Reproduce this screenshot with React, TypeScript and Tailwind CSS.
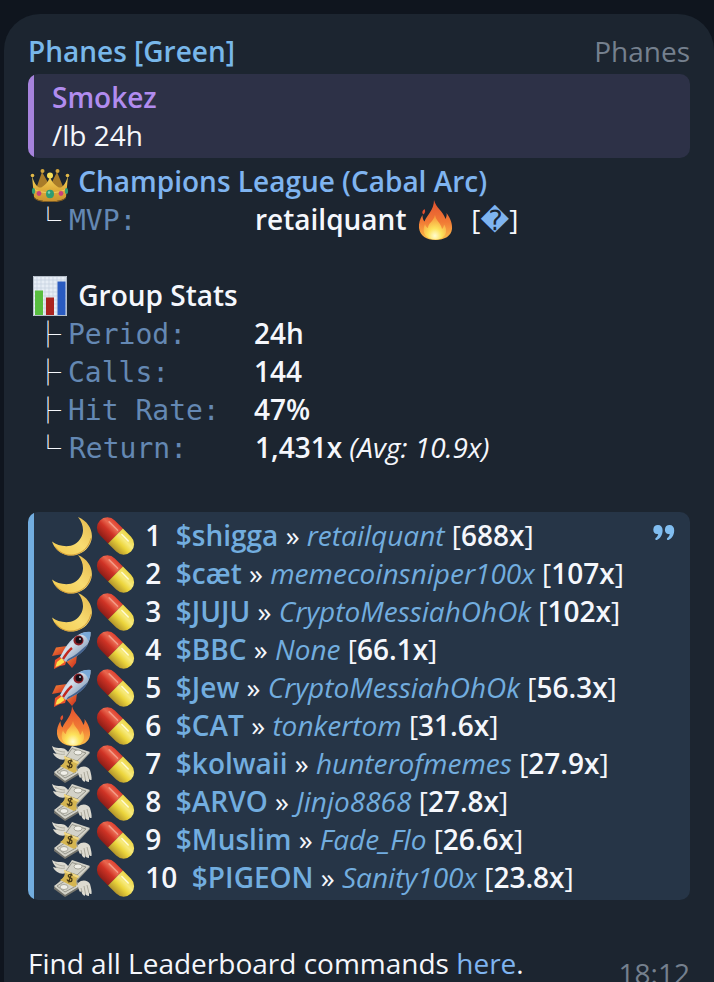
import type { ReactNode } from "react";
import clsx from "clsx";

type EmojiName = "crown" | "chart" | "moon" | "rocket" | "fire" | "money" | "pill";

interface Call {
  icon: EmojiName;
  token: string;
  caller: string;
  gain: string;
}

const CALLS: Call[] = [
  { icon: "moon", token: "$shigga", caller: "retailquant", gain: "688x" },
  { icon: "moon", token: "$cæt", caller: "memecoinsniper100x", gain: "107x" },
  { icon: "moon", token: "$JUJU", caller: "CryptoMessiahOhOk", gain: "102x" },
  { icon: "rocket", token: "$BBC", caller: "None", gain: "66.1x" },
  { icon: "rocket", token: "$Jew", caller: "CryptoMessiahOhOk", gain: "56.3x" },
  { icon: "fire", token: "$CAT", caller: "tonkertom", gain: "31.6x" },
  { icon: "money", token: "$kolwaii", caller: "hunterofmemes", gain: "27.9x" },
  { icon: "money", token: "$ARVO", caller: "Jinjo8868", gain: "27.8x" },
  { icon: "money", token: "$Muslim", caller: "Fade_Flo", gain: "26.6x" },
  { icon: "money", token: "$PIGEON", caller: "Sanity100x", gain: "23.8x" },
];

// shared gradients, referenced by every Emoji on the page
function EmojiDefs() {
  return (
    <svg width="0" height="0" className="absolute" aria-hidden="true">
      <defs>
        <linearGradient id="gold" x1="0" y1="0" x2="0" y2="1">
          <stop offset="0" stopColor="#f6d65c" />
          <stop offset="0.5" stopColor="#e0ae3c" />
          <stop offset="1" stopColor="#c9922f" />
        </linearGradient>
        <linearGradient id="moon" x1="0" y1="1" x2="1" y2="0">
          <stop offset="0" stopColor="#f3c94b" />
          <stop offset="0.5" stopColor="#f8dc72" />
          <stop offset="1" stopColor="#e5b74a" />
        </linearGradient>
        <linearGradient id="pillRed" x1="0" y1="0" x2="0" y2="1">
          <stop offset="0" stopColor="#e0402f" />
          <stop offset="0.3" stopColor="#e9674f" />
          <stop offset="0.55" stopColor="#cf3325" />
          <stop offset="1" stopColor="#8e1d17" />
        </linearGradient>
        <linearGradient id="pillYellow" x1="0" y1="0" x2="0" y2="1">
          <stop offset="0" stopColor="#ecd546" />
          <stop offset="0.35" stopColor="#f7ea7c" />
          <stop offset="0.6" stopColor="#ecd53c" />
          <stop offset="1" stopColor="#b3942a" />
        </linearGradient>
        <linearGradient id="flameOuter" x1="0" y1="0" x2="0" y2="1">
          <stop offset="0" stopColor="#e2502f" />
          <stop offset="0.55" stopColor="#f17a35" />
          <stop offset="1" stopColor="#fbc04a" />
        </linearGradient>
        <radialGradient id="flameInner" cx="0.5" cy="0.85" r="0.75">
          <stop offset="0" stopColor="#fffbd0" />
          <stop offset="0.4" stopColor="#fde35c" />
          <stop offset="1" stopColor="#f79a3c" />
        </radialGradient>
        <linearGradient id="hull" x1="0" y1="0" x2="1" y2="1">
          <stop offset="0" stopColor="#5f8fc4" />
          <stop offset="0.4" stopColor="#d5e0ec" />
          <stop offset="0.65" stopColor="#9fb2c9" />
          <stop offset="1" stopColor="#4c6c98" />
        </linearGradient>
        <linearGradient id="fin" x1="0" y1="0" x2="1" y2="1">
          <stop offset="0" stopColor="#f58a3a" />
          <stop offset="1" stopColor="#c9271e" />
        </linearGradient>
      </defs>
    </svg>
  );
}

const DRAWINGS: Record<EmojiName, ReactNode> = {
  crown: (
    <>
      <path d="M8 27 14 10l8 14 7-14 7 17Z" fill="#a97c29" />
      <circle cx="14.5" cy="9" r="2" fill="#d3a63c" />
      <circle cx="29.5" cy="9" r="2" fill="#d3a63c" />
      <path
        d="M4 14C7 24 11 27 14 25c5-3 7-7 8-11 1 4 3 8 8 11 3 2 7-1 10-11l-2 21c-4 6-28 6-32 0Z"
        fill="url(#gold)"
      />
      <path d="M6 35c4 6 28 6 32 0v1c-4 6-28 6-32 0Z" fill="#8f6420" />
      <path d="M6 27c6 5 26 5 32 0" fill="none" stroke="#f3d469" strokeWidth="0.8" />
      <circle cx="4.5" cy="13.5" r="1.8" fill="#e3b948" />
      <circle cx="39.5" cy="13.5" r="1.8" fill="#e3b948" />
      <circle cx="22" cy="13.5" r="3" fill="#f7e05a" />
      <ellipse cx="22" cy="32" rx="4" ry="4.2" fill="#2f9c72" />
      <circle cx="11" cy="31.5" r="2.4" fill="#c7417c" />
      <circle cx="33" cy="31.5" r="2.4" fill="#c7417c" />
      <ellipse cx="5.5" cy="29" rx="1.6" ry="3" fill="#2f9c72" />
      <ellipse cx="38.5" cy="29" rx="1.6" ry="3" fill="#2f9c72" />
      <circle cx="21" cy="30.5" r="1.2" fill="#7fd4b4" />
    </>
  ),
  chart: (
    <>
      <path d="M5 0h34v40H5Z" fill="#e6edf5" />
      <path
        d="M9 0v40M13 0v40M17 0v40M21 0v40M25 0v40M29 0v40M33 0v40M37 0v40M5 4h34M5 8h34M5 12h34M5 16h34M5 20h34M5 24h34M5 28h34M5 32h34M5 36h34"
        stroke="#c3d0df"
        strokeWidth="0.7"
      />
      <path d="M5.5.5h33v39h-33Z" fill="none" stroke="#b4bdc8" />
      <path d="M7 14.5h8V39H7Z" fill="#58bd3f" />
      <path d="M18 21.5h8V39h-8Z" fill="#ab241f" />
      <path d="M29.5 5.5h8V39h-8Z" fill="#2a5bc0" />
    </>
  ),
  moon: (
    <>
      <path
        d="M26 1c12 5 17 17 12 27-5 10-16 13-24 11C7 37 2 32 0 25.5 6 30 16 32 23 28c9-6 11-17 3-27Z"
        fill="url(#moon)"
      />
      <path d="M39 22c-3 13-15 19-25 16.500-5-1.500-9-5-11-8" fill="none" stroke="#c98f31" strokeWidth="0.8" />
    </>
  ),
  rocket: (
    <>
      <path d="m9 26-6 4-1 9 6-3 5-1 2-6Z" fill="#f0522c" />
      <path d="m10 28-5 4-1.5 5 5-2 4-3Z" fill="#fbe34e" />
      <path d="M15 16 4 17.5 0 26l11-2Z" fill="url(#fin)" />
      <path d="m25 25-1 8-4 5-6-7Z" fill="url(#fin)" />
      <path d="M38.5 2C29 1 20 7 13 18l-5 9 6 5 11-6C34 20 39 11 38.5 2Z" fill="url(#hull)" />
      <path d="M38.5 2c-4-.5-8 .5-11 2.5 5 0 8 3 9 7.5 1.5-3 2.200-6.500 2-10Z" fill="#7ba9d8" />
      <path d="M25 26c5-3 9-7 11-12-4 3-12 12-20 15l-2 3Z" fill="#46648f" />
      <path d="M20 18c-4 3-7 8-9 11" stroke="#c2281f" strokeWidth="2.5" fill="none" />
      <circle cx="26.5" cy="10.5" r="5" fill="#8c1f25" />
      <circle cx="27" cy="10" r="3.5" fill="#190f18" />
      <circle cx="28" cy="9" r="0.9" fill="#c9d6e6" />
    </>
  ),
  fire: (
    <>
      <path
        d="M20 0c2 8 9 11 11.500 19 1-2 1.500-4 1-6 4 5 6 11 5.500 16-.8 7-7.500 11-16.500 11S6 36 5 28c-.5-5 1-9 3.500-13 0 3 .5 5 2 6.500C13 15 20 10 20 0Z"
        fill="url(#flameOuter)"
      />
      <path d="M10.5 9c1 2 1 3.500-1 5.500C7.500 13 8 11 10.500 9Z" fill="#e2502f" />
      <path
        d="M21 15c1 6 6 8 7 14 1-1 2-2.500 2-4.500 5 7 1 15-8.500 15S7 33 11 24c.5 2 1.500 3.500 3 4 0-5 6-7 7-13Z"
        fill="url(#flameInner)"
      />
    </>
  ),
  money: (
    <>
      <path
        d="M14 15c-5 2-11-1-13-6l4 1C3 8 1 6 0 2c3 2 6 2 9 2 4 0 7 3 8 6Z"
        fill="#dcdad0"
      />
      <path d="M3 5c3 2 6 3 10 3M4 9c3 1 6 2 9 1" stroke="#a5a395" strokeWidth="0.8" fill="none" />
      <path d="m20 3 18 6-13 14 3 6-15 9L2 29l11-11Z" fill="#9b9a90" />
      <path d="M20 2 38 8 26 20 12 14Z" fill="#d3d2c8" />
      <path d="m13 20 15 8-15 9L2 28Z" fill="#d3d2c8" />
      <path d="M20 4.500 34 9l-9 8-11-4ZM13 23l11 5-11 6-8-6Z" fill="none" stroke="#87867c" strokeWidth="0.8" />
      <ellipse cx="26" cy="8.5" rx="4" ry="2.5" fill="#f0efe8" stroke="#99988c" strokeWidth="0.8" />
      <ellipse cx="12" cy="29" rx="4" ry="2.5" fill="#f0efe8" stroke="#99988c" strokeWidth="0.8" />
      <path d="m2 29 11 8 15-9v2l-15 9L2 31Z" fill="#77766e" />
      <path d="M12 12 27 18c-2 3-4 4-2 9l-3 2-14-7c4-2 6-6 4-10Z" fill="#d6b651" />
      <path d="M12 12 27 18l-1 2-14-6Z" fill="#efd887" />
      <path d="M20.500 17.500c-2-2-5-1-4 1s4 1 3.500 3.500-4 2-5-.5M19.500 15.500l-3 9" fill="none" stroke="#4c3d18" strokeWidth="1.3" />
      <path
        d="M26 25c4-4 10-3 12 1 1 4 2 7 1.500 10-1.500 0-2-.5-2.500-1v3c-2 0-3-1-3.500-2l-1 2c-2-1-3-3-3-5l-1.500 1c-2-3-2-6-2-9Z"
        fill="#dcdad0"
      />
      <path d="M29 30l1 4M32 28l1.500 8M35 27l2 8" stroke="#a5a395" strokeWidth="0.9" fill="none" />
    </>
  ),
  pill: (
    <g transform="rotate(45 20.5 20)">
      <path d="M20.500 9.500H9a10.500 10.500 0 0 0 0 21h11.500Z" fill="url(#pillRed)" />
      <path d="M20.500 9.500H32a10.500 10.500 0 0 1 0 21H20.500Z" fill="url(#pillYellow)" />
      <path d="M6 14.500h12" stroke="#f39a86" strokeWidth="1.5" strokeLinecap="round" />
      <path d="M24 14.500h9" stroke="#fffbd2" strokeWidth="1.5" strokeLinecap="round" />
    </g>
  ),
};

function Emoji({ name }: { name: EmojiName }) {
  return (
    <svg
      viewBox="0 0 43 40"
      role="img"
      aria-label={name}
      className="-mb-0.5 inline-block h-10 w-[43px] align-top"
    >
      {DRAWINGS[name]}
    </svg>
  );
}

interface StatProps {
  label: string;
  last?: boolean;
  children: ReactNode;
}

function Stat({ label, last, children }: StatProps) {
  return (
    <div className="flex h-[38px] items-baseline">
      <span
        aria-hidden="true"
        className={clsx(
          "shrink-0 self-start pl-[7px] font-['Noto_Sans_CJK_JP',sans-serif] text-[26px]",
          last ? "w-[41px] font-bold" : "w-10",
        )}
      >
        {last ? "└" : "├"}
      </span>
      <dt className="w-[186px] shrink-0 font-['DejaVu_Sans_Mono',monospace] text-[#6488b3]">
        {label}
      </dt>
      <dd className="whitespace-pre font-semibold">{children}</dd>
    </div>
  );
}

export default function App() {
  return (
    <main className="h-screen overflow-hidden bg-[#0f151e] pt-3.5 pl-1 font-['Open_Sans',sans-serif] text-[28px] leading-[38px] text-[#f5f7fc]">
      <EmojiDefs />
      <article className="rounded-[36px] bg-[#1c2530] px-6 pt-[18px] pb-6">
        <header className="flex justify-between">
          <h1 className="font-semibold text-[#78b7ea]">Phanes [Green]</h1>
          <span className="text-[#75808e]">Phanes</span>
        </header>

        <div className="mt-1 overflow-hidden rounded-[10px] bg-[#2d3147]">
          <div className="border-l-6 border-[#a683dc] py-1 pl-[18px]">
            <p className="font-semibold text-[#b18cef]">Smokez</p>
            <p>/lb 24h</p>
          </div>
        </div>

        <section className="mt-1">
          <h2 className="font-semibold text-[#7fb4f0]">
            <Emoji name="crown" /> Champions League (Cabal Arc)
          </h2>
          <dl>
            <Stat label="MVP:" last>
              retailquant <Emoji name="fire" />
              {"  "}
              <span className="font-normal">
                [<span className="font-['DejaVu_Sans',sans-serif] text-[#7fb4f0]">{"\uFFFD"}</span>]
              </span>
            </Stat>
          </dl>
        </section>

        <section className="mt-[38px]">
          <h2 className="font-semibold">
            <Emoji name="chart" /> Group Stats
          </h2>
          <dl>
            <Stat label="Period:">24h</Stat>
            <Stat label="Calls:">144</Stat>
            <Stat label="Hit Rate:">47%</Stat>
            <Stat label="Return:" last>
              1,431x <i className="font-normal">(Avg: 10.9x)</i>
            </Stat>
          </dl>
        </section>

        <blockquote className="mt-[46px] overflow-hidden rounded-[10px] bg-[#263547]">
          <div className="relative border-l-6 border-[#72addf] py-1 pl-[18px]">
            <ol>
              {CALLS.map(({ icon, token, caller, gain }, i) => (
                <li key={token} className="whitespace-pre">
                  <Emoji name={icon} />
                  <Emoji name="pill" /> <b className="font-semibold">{i + 1}</b>
                  {"  "}
                  <a href="#" className="font-semibold text-[#72addf]">
                    {token}
                  </a>{" "}
                  »{" "}
                  <a href="#" className="text-[#72addf] italic">
                    {caller}
                  </a>{" "}
                  [<b className="font-semibold">{gain}</b>]
                </li>
              ))}
            </ol>
            <svg
              viewBox="0 0 22 16"
              aria-hidden="true"
              className="absolute top-[13px] right-[15px] h-4 w-[22px] fill-[#80bdf0]"
            >
              <path d="M5 0a4.600 4.600 0 0 0-1 9.100c.4.100.8.100 1.200 0-.3 1.700-1.200 3-2.500 4-1 .9 0 2.400 1.200 1.800C7.400 13.300 9.600 9.800 9.600 5.200 9.600 2 7.800 0 5 0Z" />
              <path d="M16.600 0a4.600 4.600 0 0 0-1 9.100c.4.100.8.100 1.200 0-.3 1.700-1.200 3-2.500 4-1 .9 0 2.400 1.200 1.800 3.500-1.600 5.700-5.100 5.700-9.700C21.200 2 19.400 0 16.600 0Z" />
            </svg>
          </div>
        </blockquote>

        <footer className="mt-11 flex justify-between">
          <p>
            Find all Leaderboard commands{" "}
            <a href="#" className="text-[#7fb4f0]">
              here
            </a>
            .
          </p>
          <time className="pt-2.5 text-[#75808e]">18:12</time>
        </footer>
      </article>
    </main>
  );
}
